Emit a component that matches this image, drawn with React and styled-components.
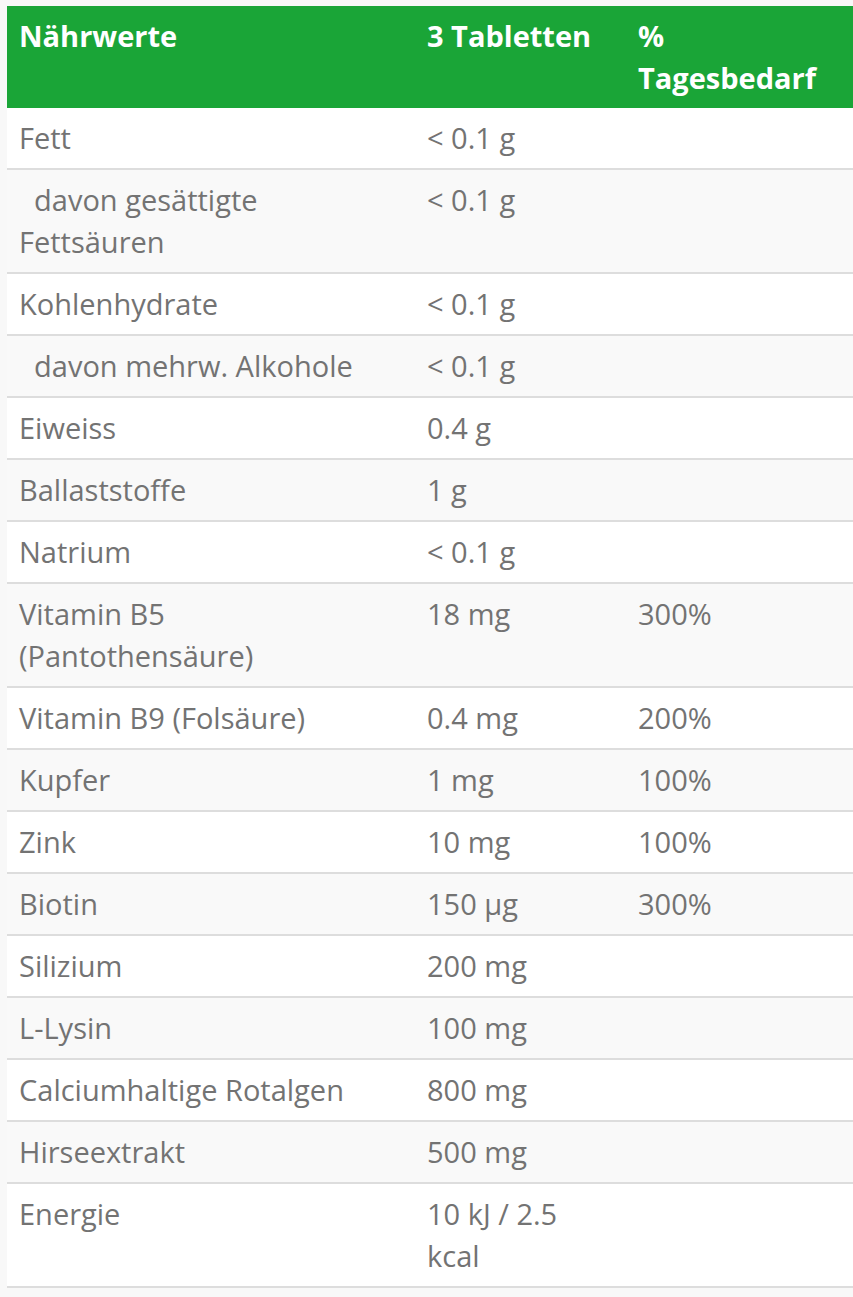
import styled, { createGlobalStyle } from "styled-components";

const GlobalStyle = createGlobalStyle`
  body {
    margin: 0;
    background: #f8f8f8;
    font-family: "Open Sans", "Liberation Sans", sans-serif;
  }
`;

const Page = styled.div`
  padding: 6px 0 0 7px;
  overflow: hidden;
`;

const Table = styled.table`
  width: 846px;
  border-collapse: collapse;
  table-layout: fixed;
  font-size: 29px;
  line-height: 42px;
`;

const HeadCell = styled.th`
  box-sizing: border-box;
  width: ${(props) => props.$width}px;
  background: #1aa537;
  color: #fff;
  font-weight: 700;
  text-align: left;
  vertical-align: top;
  padding: 9px 24px 9px 12px;
`;

const Row = styled.tr`
  background: ${(props) => (props.$striped ? "#f9f9f9" : "#fff")};
  border-bottom: 2px solid #dddddd;
`;

const Cell = styled.td`
  box-sizing: border-box;
  color: #737373;
  vertical-align: top;
  padding: 9px 24px 9px 12px;
`;

const rows = [
  ["Fett", "< 0.1 g", ""],
  ["\u00a0\u00a0davon gesättigte Fettsäuren", "< 0.1 g", ""],
  ["Kohlenhydrate", "< 0.1 g", ""],
  ["\u00a0\u00a0davon mehrw. Alkohole", "< 0.1 g", ""],
  ["Eiweiss", "0.4 g", ""],
  ["Ballaststoffe", "1 g", ""],
  ["Natrium", "< 0.1 g", ""],
  ["Vitamin B5 (Pantothensäure)", "18 mg", "300%"],
  ["Vitamin B9 (Folsäure)", "0.4 mg", "200%"],
  ["Kupfer", "1 mg", "100%"],
  ["Zink", "10 mg", "100%"],
  ["Biotin", "150 µg", "300%"],
  ["Silizium", "200 mg", ""],
  ["L-Lysin", "100 mg", ""],
  ["Calciumhaltige Rotalgen", "800 mg", ""],
  ["Hirseextrakt", "500 mg", ""],
  ["Energie", "10 kJ / 2.5 kcal", ""],
];

export default function App() {
  return (
    <Page>
      <GlobalStyle />
      <Table>
        <thead>
          <tr>
            <HeadCell $width={408}>Nährwerte</HeadCell>
            <HeadCell $width={211}>3 Tabletten</HeadCell>
            <HeadCell $width={227}>% Tagesbedarf</HeadCell>
          </tr>
        </thead>
        <tbody>
          {rows.map(([name, amount, daily], i) => (
            <Row key={name} $striped={i % 2 === 1}>
              <Cell>{name}</Cell>
              <Cell>{amount}</Cell>
              <Cell>{daily}</Cell>
            </Row>
          ))}
        </tbody>
      </Table>
    </Page>
  );
}
